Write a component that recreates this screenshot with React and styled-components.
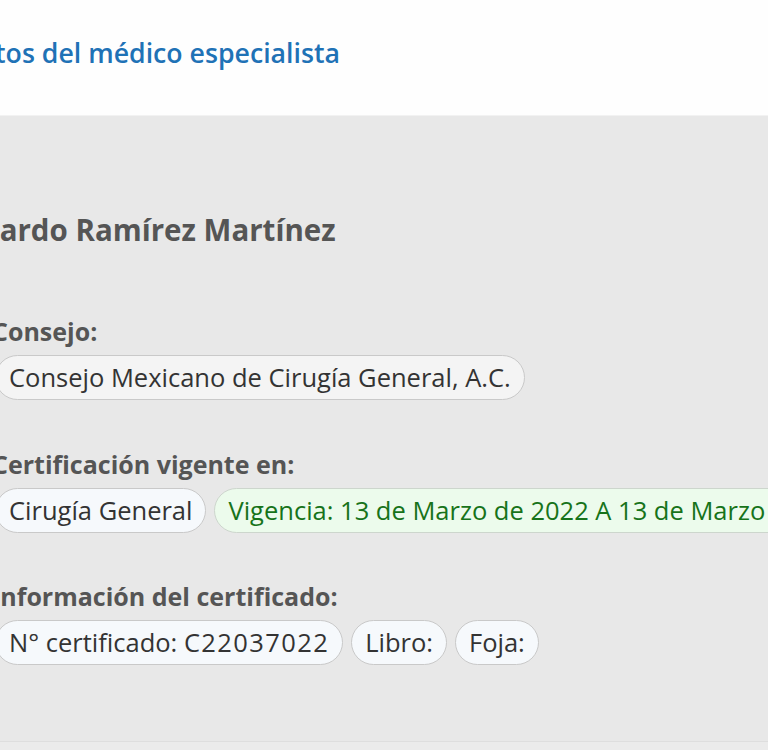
import React from "react";
import styled, { createGlobalStyle } from "styled-components";

const Global = createGlobalStyle`
  html, body { margin: 0; padding: 0; background: #ebebeb; overflow: hidden; }
  body { font-family: "Open Sans", "Lato", sans-serif; }
`;

const Header = styled.header`
  height: 116px;
  box-sizing: border-box;
  padding-top: 36px;
  background: #fefefe;
  border-bottom: 1px solid #f2f2f2;
  overflow: hidden;
`;

const Title = styled.h1`
  margin: 0 0 0 -40px;
  font-size: 26.7px;
  line-height: 34px;
  font-weight: 600;
  color: #1f72b6;
  white-space: nowrap;
`;

const Body = styled.main`
  background: #e8e8e8;
  height: 626px;
  padding: 94px 0 0 0;
  box-sizing: border-box;
  overflow: hidden;
  border-bottom: 1px solid #dedede;
`;

const Name = styled.h2`
  margin: 0 0 0 -44px;
  font-size: 29.5px;
  font-weight: 700;
  color: #555;
  white-space: nowrap;
  line-height: 40px;
`;

const Sections = styled.div`
  margin: 66px 0 0 -5px;
  display: flex;
  flex-direction: column;
  gap: 48.5px;
`;

const Section = styled.section`
  display: flex;
  flex-direction: column;
  gap: 8px;
`;

const Label = styled.h3`
  margin: 0 0 0 -3px;
  font-size: 25px;
  font-weight: 700;
  color: #555;
  line-height: 31px;
  white-space: nowrap;
`;

const Chips = styled.div`
  display: flex;
  gap: 8px;
  flex-wrap: nowrap;
`;

const Chip = styled.span`
  display: inline-block;
  height: 45px;
  line-height: 43px;
  box-sizing: border-box;
  padding: 0 13px;
  border-radius: 23px;
  border: 1px solid ${(p) => (p.$tone === "green" ? "#cdd6cd" : "#c9c9c9")};
  background: ${(p) =>
    p.$tone === "green" ? "#ecfbec" : p.$tone === "grey" ? "#f4f4f4" : "#f6f9fc"};
  color: ${(p) => (p.$tone === "green" ? "#17731a" : "#333")};
  font-size: 25.5px;
  white-space: nowrap;
  flex-shrink: 0;
`;

const Code = styled.span`
  letter-spacing: 1.4px;
`;

export default function App() {
  return (
    <>
      <Global />
      <Header>
        <Title>Datos del médico especialista</Title>
      </Header>
      <Body>
        <Name>Ricardo Ramírez Martínez</Name>
        <Sections>
          <Section>
            <Label>Consejo:</Label>
            <Chips>
              <Chip $tone="grey">Consejo Mexicano de Cirugía General, A.C.</Chip>
            </Chips>
          </Section>
          <Section>
            <Label>Certificación vigente en:</Label>
            <Chips>
              <Chip>Cirugía General</Chip>
              <Chip $tone="green">Vigencia: 13 de Marzo de 2022 A 13 de Marzo de 2027</Chip>
            </Chips>
          </Section>
          <Section>
            <Label>Información del certificado:</Label>
            <Chips>
              <Chip>
                N° certificado: <Code>C22037022</Code>
              </Chip>
              <Chip>Libro:</Chip>
              <Chip>Foja:</Chip>
            </Chips>
          </Section>
        </Sections>
      </Body>
    </>
  );
}
